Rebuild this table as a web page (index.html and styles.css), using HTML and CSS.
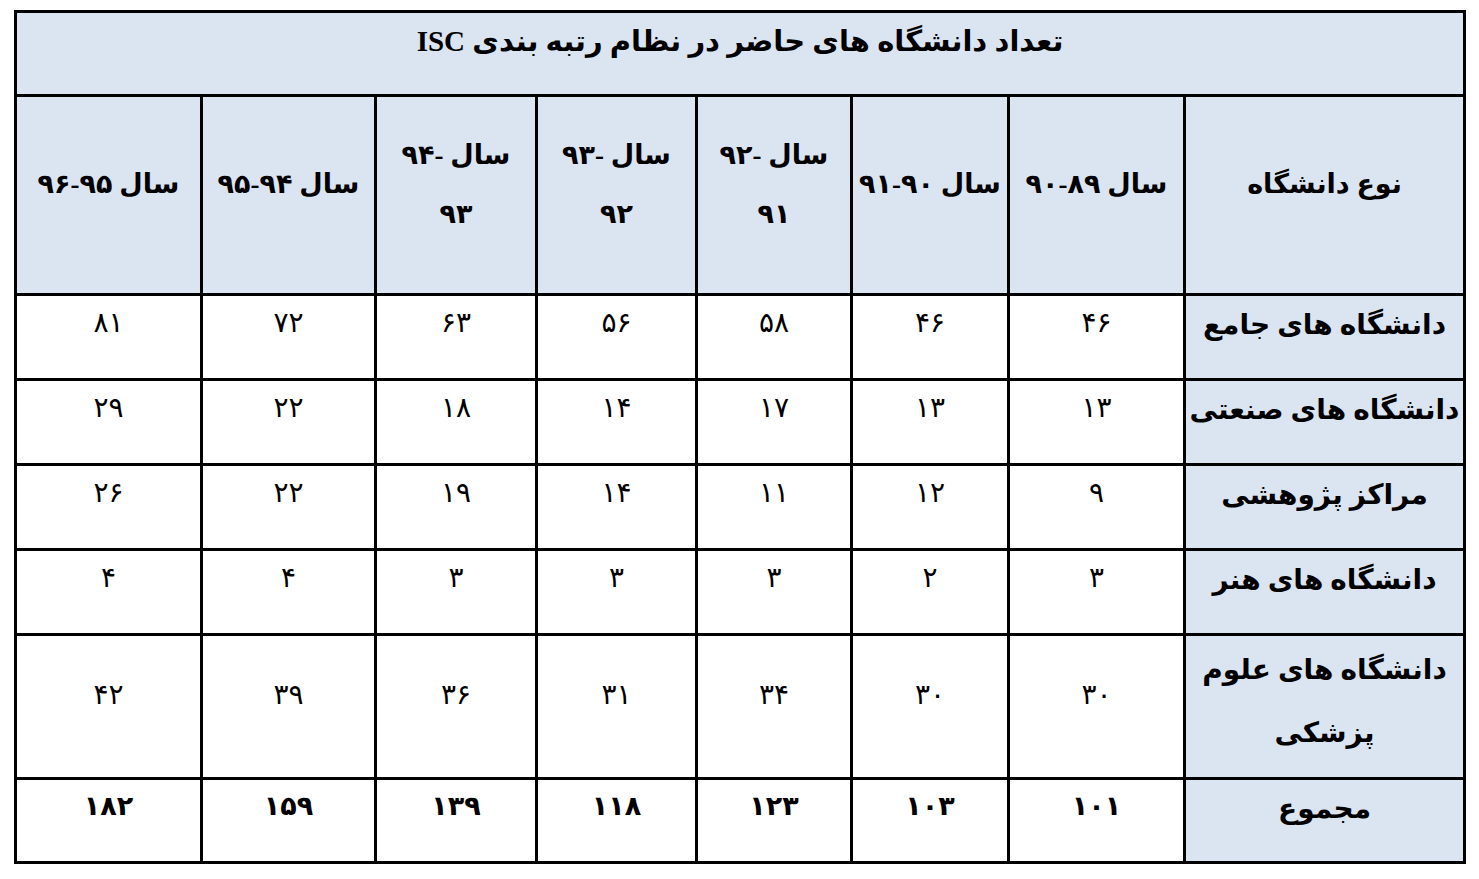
FILE: index.html
```html
<!DOCTYPE html>
<html lang="fa">
<head>
<meta charset="utf-8">
<title>ISC</title>
<link rel="stylesheet" href="styles.css">
</head>
<body>
<table class="tbl" dir="rtl">
  <colgroup>
    <col class="c1"><col class="c2"><col class="c3"><col class="c4"><col class="c5"><col class="c6"><col class="c7"><col class="c8">
  </colgroup>
  <tr class="r-title">
    <td class="title" colspan="8">تعداد دانشگاه های حاضر در نظام رتبه بندی ISC</td>
  </tr>
  <tr class="r-head">
    <td class="head">نوع دانشگاه</td>
    <td class="head nowrap">سال ۸۹-۹۰</td>
    <td class="head nowrap">سال ۹۰-۹۱</td>
    <td class="head">سال -۹۲<br>۹۱</td>
    <td class="head">سال -۹۳<br>۹۲</td>
    <td class="head">سال -۹۴<br>۹۳</td>
    <td class="head nowrap">سال ۹۴-۹۵</td>
    <td class="head nowrap">سال ۹۵-۹۶</td>
  </tr>
  <tr class="r-data">
    <td class="kind">دانشگاه های جامع</td>
    <td class="num">۴۶</td><td class="num">۴۶</td><td class="num">۵۸</td><td class="num">۵۶</td><td class="num">۶۳</td><td class="num">۷۲</td><td class="num">۸۱</td>
  </tr>
  <tr class="r-data">
    <td class="kind">دانشگاه های صنعتی</td>
    <td class="num">۱۳</td><td class="num">۱۳</td><td class="num">۱۷</td><td class="num">۱۴</td><td class="num">۱۸</td><td class="num">۲۲</td><td class="num">۲۹</td>
  </tr>
  <tr class="r-data">
    <td class="kind">مراکز پژوهشی</td>
    <td class="num">۹</td><td class="num">۱۲</td><td class="num">۱۱</td><td class="num">۱۴</td><td class="num">۱۹</td><td class="num">۲۲</td><td class="num">۲۶</td>
  </tr>
  <tr class="r-data">
    <td class="kind">دانشگاه های هنر</td>
    <td class="num">۳</td><td class="num">۲</td><td class="num">۳</td><td class="num">۳</td><td class="num">۳</td><td class="num">۴</td><td class="num">۴</td>
  </tr>
  <tr class="r-tall">
    <td class="kind two">دانشگاه های علوم<br>پزشکی</td>
    <td class="num mid">۳۰</td><td class="num mid">۳۰</td><td class="num mid">۳۴</td><td class="num mid">۳۱</td><td class="num mid">۳۶</td><td class="num mid">۳۹</td><td class="num mid">۴۲</td>
  </tr>
  <tr class="r-last">
    <td class="kind">مجموع</td>
    <td class="num bold">۱۰۱</td><td class="num bold">۱۰۳</td><td class="num bold">۱۲۳</td><td class="num bold">۱۱۸</td><td class="num bold">۱۳۹</td><td class="num bold">۱۵۹</td><td class="num bold">۱۸۲</td>
  </tr>
</table>
</body>
</html>
```
FILE: styles.css
```css
html, body {
  margin: 0;
  background: #ffffff;
}
body {
  padding: 10px 0 0 14px;
  font-family: "Liberation Serif", "DejaVu Sans", sans-serif;
  color: #000;
}
.tbl {
  border-collapse: collapse;
  table-layout: fixed;
  width: 1452px;
}
.c1 { width: 280px; }
.c2 { width: 176px; }
.c3 { width: 157px; }
.c4 { width: 155px; }
.c5 { width: 160px; }
.c6 { width: 161px; }
.c7 { width: 174px; }
.c8 { width: 186px; }
td {
  border: 3px solid #000;
  text-align: center;
  padding: 0;
  overflow: hidden;
}
.r-title { height: 84px; }
.r-head { height: 199px; }
.r-data { height: 85px; }
.r-tall { height: 144px; }
.r-last { height: 84px; }
.title {
  background: #dbe5f1;
  font-weight: bold;
  font-size: 29px;
  vertical-align: top;
  padding-top: 11px;
}
.head {
  background: #dbe5f1;
  font-weight: bold;
  font-size: 27px;
  line-height: 59px;
  vertical-align: middle;
  padding-bottom: 21px;
}
.nowrap { white-space: nowrap; }
.kind {
  background: #dbe5f1;
  font-weight: bold;
  font-size: 28px;
  white-space: nowrap;
  vertical-align: top;
  padding-top: 12px;
}
.kind.two {
  line-height: 63px;
  padding-top: 2px;
}
.num {
  font-size: 28px;
  vertical-align: top;
  padding-top: 10px;
}
.num.mid {
  padding-top: 42px;
}
.num.bold {
  font-weight: bold;
  font-size: 27px;
}
```
